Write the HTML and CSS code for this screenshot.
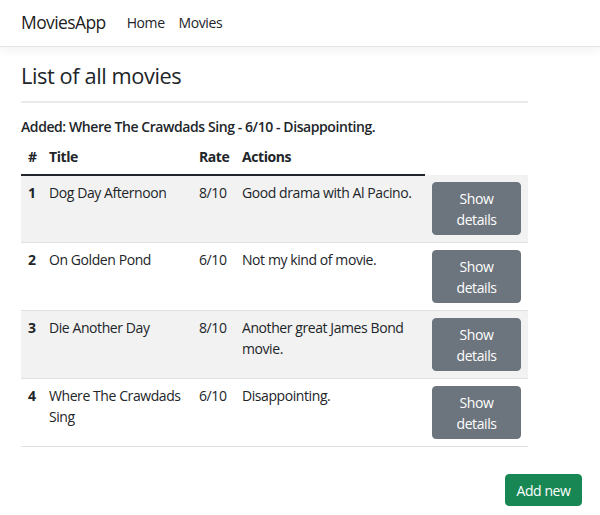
FILE: index.html
```html
<!DOCTYPE html>
<html lang="en">
<head>
<meta charset="utf-8">
<title>MoviesApp</title>
<link rel="stylesheet" href="styles.css">
</head>
<body>
<header class="navbar">
  <a class="brand" href="#">MoviesApp</a>
  <nav class="nav">
    <a class="nav-link" href="#">Home</a>
    <a class="nav-link" href="#">Movies</a>
  </nav>
</header>
<main class="main">
  <div class="list">
    <h3 class="title">List of all movies</h3>
    <hr class="rule">
    <div class="notice">Added: Where The Crawdads Sing - 6/10 - Disappointing.</div>
    <table class="table">
      <colgroup>
        <col class="c-num">
        <col class="c-title">
        <col class="c-rate">
        <col class="c-actions">
        <col class="c-btn">
      </colgroup>
      <thead>
        <tr>
          <th class="hd">#</th>
          <th class="hd">Title</th>
          <th class="hd">Rate</th>
          <th class="hd">Actions</th>
        </tr>
      </thead>
      <tbody>
        <tr class="odd">
          <td class="num">1</td>
          <td>Dog Day Afternoon</td>
          <td>8/10</td>
          <td>Good drama with Al Pacino.</td>
          <td><button class="btn btn-secondary">Show details</button></td>
        </tr>
        <tr>
          <td class="num">2</td>
          <td>On Golden Pond</td>
          <td>6/10</td>
          <td>Not my kind of movie.</td>
          <td><button class="btn btn-secondary">Show details</button></td>
        </tr>
        <tr class="odd">
          <td class="num">3</td>
          <td>Die Another Day</td>
          <td>8/10</td>
          <td>Another great James Bond movie.</td>
          <td><button class="btn btn-secondary">Show details</button></td>
        </tr>
        <tr>
          <td class="num">4</td>
          <td>Where The Crawdads Sing</td>
          <td>6/10</td>
          <td>Disappointing.</td>
          <td><button class="btn btn-secondary">Show details</button></td>
        </tr>
      </tbody>
    </table>
  </div>
  <div class="footer-row">
    <button class="btn btn-success">Add new</button>
  </div>
</main>
</body>
</html>
```
FILE: styles.css
```css
* { box-sizing: border-box; }
html { font-size: 14px; }
body {
  margin: 0;
  font-family: "Open Sans", "Noto Sans", sans-serif;
  font-size: 14px;
  line-height: 1.5;
  color: #212529;
  background: #fff;
  letter-spacing: -0.42px;
}
.navbar {
  height: 47px;
  display: flex;
  align-items: center;
  padding: 0 21px;
  background: #fff;
  border-bottom: 1px solid #e5e5e5;
  box-shadow: 0 4px 10px rgba(0,0,0,0.05);
}
.brand {
  font-size: 17.5px;
  letter-spacing: -0.6px;
  color: rgba(0,0,0,0.9);
  text-decoration: none;
  margin-right: 14px;
  margin-top: -1px;
}
.nav { display: flex; }
.nav-link {
  color: #212529;
  text-decoration: none;
  padding: 0 7px;
  margin-top: -1px;
}
.main {
  padding: 16px 18px 0 21px;
}
.list { width: 507px; }
.title {
  margin: 0 0 12px;
  font-size: 21.8px;
  font-weight: 500;
  line-height: 1.2;
}
.rule {
  margin: 0 0 13px;
  border: 0;
  height: 2px;
  background: #ebebeb;
}
.notice {
  font-weight: 600;
  letter-spacing: -0.42px;
  margin-bottom: 2px;
}
.table {
  width: 507px;
  table-layout: fixed;
  border-collapse: collapse;
}
.c-num { width: 21px; }
.c-title { width: 150px; }
.c-rate { width: 43px; }
.c-actions { width: 190px; }
.c-btn { width: 103px; }
.table th, .table td {
  padding: 7px;
  text-align: left;
  vertical-align: top;
}
.table th.hd {
  font-weight: 700;
  border-bottom: 2px solid #212529;
}
.table td {
  border-bottom: 1px solid #dee2e6;
  padding-top: 6px;
  padding-bottom: 7px;
}
.table tr.odd td { background: #f2f2f2; }
.table td.num { font-weight: 700; }
.btn {
  font-family: inherit;
  font-size: 14px;
  line-height: 1.5;
  letter-spacing: inherit;
  border: 1px solid transparent;
  border-radius: 4px;
  color: #fff;
  padding: 4.5px 10.5px;
  cursor: pointer;
}
.btn-secondary {
  display: block;
  width: 100%;
  background: #6c757d;
  border-color: #6c757d;
  text-align: center;
  margin-top: 1px;
}
.btn-success {
  background: #198754;
  border-color: #198754;
}
.footer-row {
  display: flex;
  justify-content: flex-end;
  margin-top: 27px;
}
```
